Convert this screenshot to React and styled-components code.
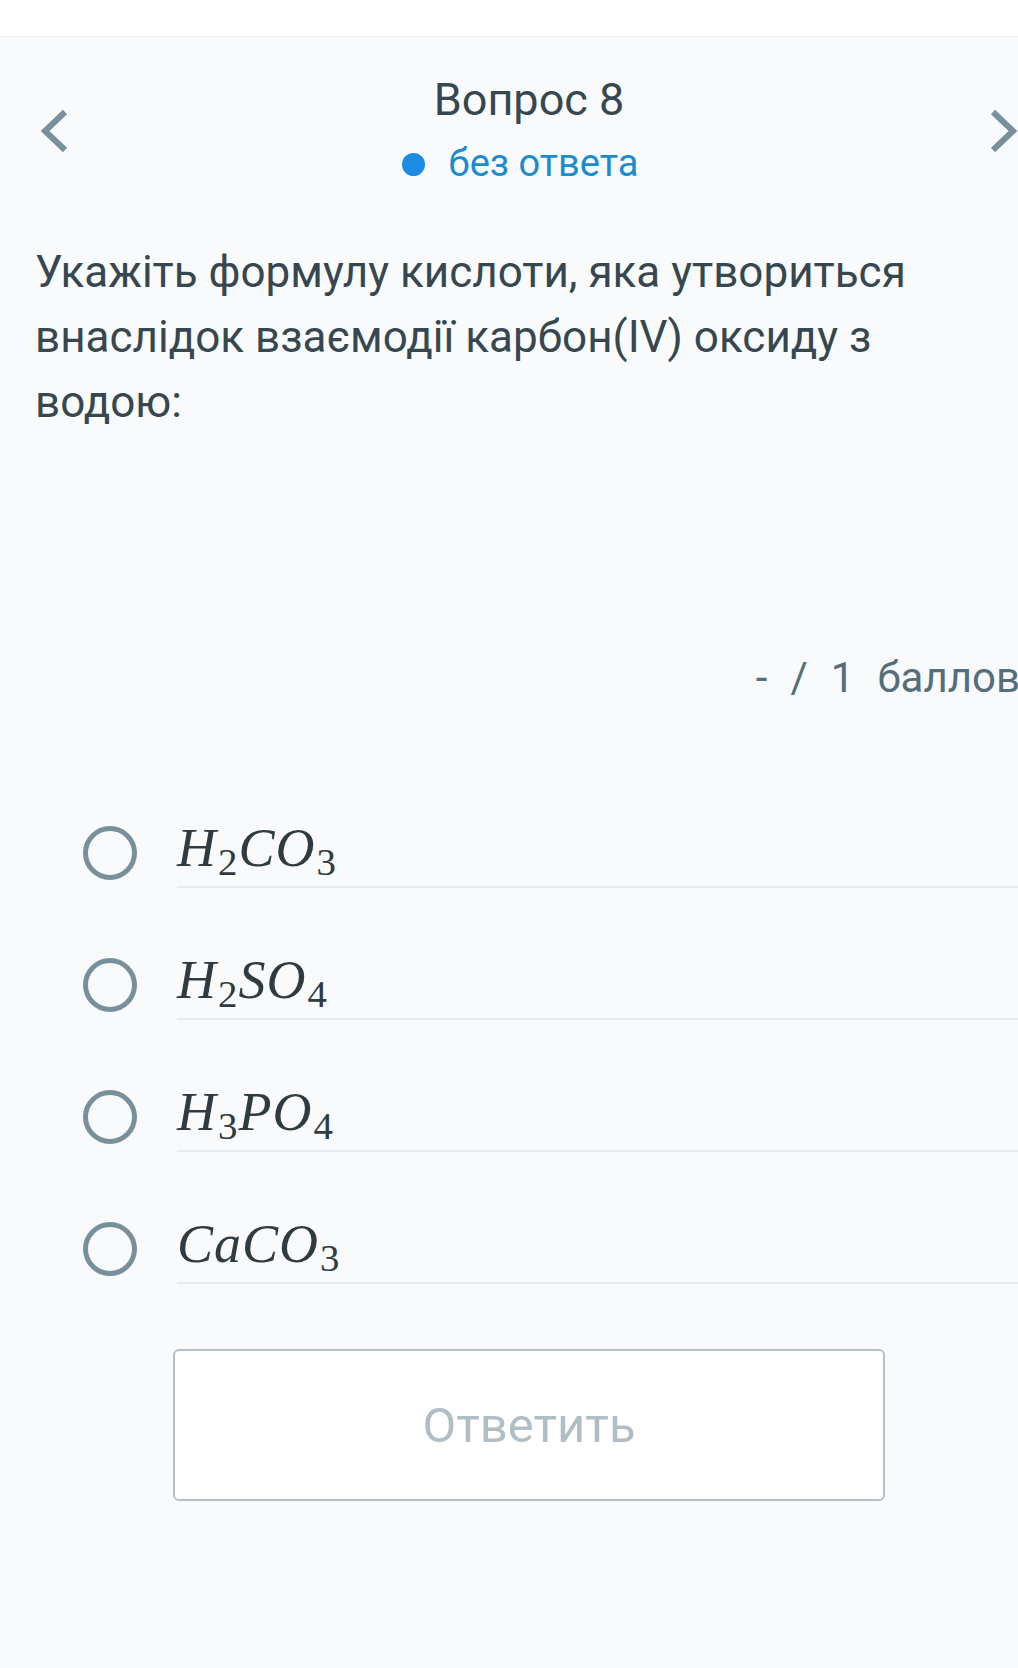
import React from 'react';
import styled, { createGlobalStyle } from 'styled-components';

const GlobalStyle = createGlobalStyle`
  html, body {
    margin: 0;
    padding: 0;
    overflow: hidden;
    background: #f8fafb;
  }
  body {
    font-family: Roboto, "Noto Sans", sans-serif;
  }
`;

const Page = styled.div`
  width: 1058px;
  min-height: 1668px;
  background: #f8fafb;
`;

const TopBar = styled.div`
  height: 36px;
  background: #fff;
  border-bottom: 1px solid #eaeef0;
`;

const Header = styled.div`
  display: flex;
  align-items: center;
  padding: 36px 40px 0 40px;
`;

const NavArrow = styled.svg`
  width: 28px;
  height: 44px;
  flex: none;
  margin-top: 4px;
`;

const HeaderCenter = styled.div`
  flex: 1;
  display: flex;
  flex-direction: column;
  align-items: center;
  gap: 14px;
`;

const Title = styled.div`
  font-size: 45px;
  line-height: 54px;
  color: #37474f;
`;

const Status = styled.div`
  display: flex;
  align-items: center;
  gap: 24px;
  padding-right: 18px;
  font-size: 38px;
  line-height: 44px;
  color: #1c8ccd;
`;

const Dot = styled.span`
  width: 23px;
  height: 23px;
  border-radius: 50%;
  background: #1a8de3;
  margin-top: 3px;
`;

const Question = styled.div`
  margin-top: 55px;
  padding: 0 50px 0 35px;
  font-size: 44px;
  line-height: 65px;
  color: #37474f;
`;

const Score = styled.div`
  margin-top: 219px;
  display: flex;
  justify-content: flex-end;
  gap: 23px;
  padding-right: 38px;
  font-size: 42px;
  line-height: 48px;
  color: #546e7a;
  white-space: nowrap;
`;

const Options = styled.div`
  margin-top: 116px;
  display: flex;
  flex-direction: column;
  gap: 62px;
`;

const OptionRow = styled.label`
  display: flex;
  align-items: center;
  gap: 40px;
  padding-left: 83px;
  cursor: pointer;
`;

const Radio = styled.span`
  width: 54px;
  height: 54px;
  box-sizing: border-box;
  border: 5px solid #78909c;
  border-radius: 50%;
  flex: none;
`;

const Formula = styled.div`
  flex: 1;
  font-family: "Liberation Serif", "Times New Roman", serif;
  font-size: 54px;
  line-height: 60px;
  color: #2f3b40;
  padding-bottom: 8px;
  border-bottom: 2px solid #e8ecef;
`;

const Var = styled.i`
  font-style: italic;
  letter-spacing: 1px;
`;

const Sub = styled.span`
  font-style: normal;
  font-size: 0.72em;
  line-height: 0;
  vertical-align: -0.24em;
  margin: 0 1px;
`;

const ButtonWrap = styled.div`
  display: flex;
  justify-content: center;
  margin-top: 65px;
`;

const AnswerButton = styled.button`
  width: 712px;
  height: 152px;
  background: #fff;
  border: 2px solid #b4c1c8;
  border-radius: 6px;
  font-family: Roboto, sans-serif;
  font-size: 49px;
  color: #b0bec5;
`;

const options = [
  ['H', '2', 'CO', '3'],
  ['H', '2', 'SO', '4'],
  ['H', '3', 'PO', '4'],
  ['CaCO', '3'],
];

const Chevron = ({ dir }) => (
  <NavArrow viewBox="0 0 28 44">
    <polyline
      points={dir === 'left' ? '25,3 5,22 25,41' : '3,3 23,22 3,41'}
      fill="none"
      stroke="#78909c"
      strokeWidth="6"
    />
  </NavArrow>
);

const renderFormula = (parts) =>
  parts.map((t, i) =>
    /^\d+$/.test(t) ? <Sub key={i}>{t}</Sub> : <Var key={i}>{t}</Var>
  );

export default function App() {
  return (
    <Page>
      <GlobalStyle />
      <TopBar />
      <Header>
        <Chevron dir="left" />
        <HeaderCenter>
          <Title>Вопрос 8</Title>
          <Status>
            <Dot />
            без ответа
          </Status>
        </HeaderCenter>
        <Chevron dir="right" />
      </Header>
      <Question>
        Укажіть формулу кислоти, яка утвориться внаслідок взаємодії карбон(IV) оксиду з водою:
      </Question>
      <Score>
        <span>-</span>
        <span>/</span>
        <span>1</span>
        <span>баллов</span>
      </Score>
      <Options>
        {options.map((o, i) => (
          <OptionRow key={i}>
            <Radio />
            <Formula>{renderFormula(o)}</Formula>
          </OptionRow>
        ))}
      </Options>
      <ButtonWrap>
        <AnswerButton>Ответить</AnswerButton>
      </ButtonWrap>
    </Page>
  );
}
